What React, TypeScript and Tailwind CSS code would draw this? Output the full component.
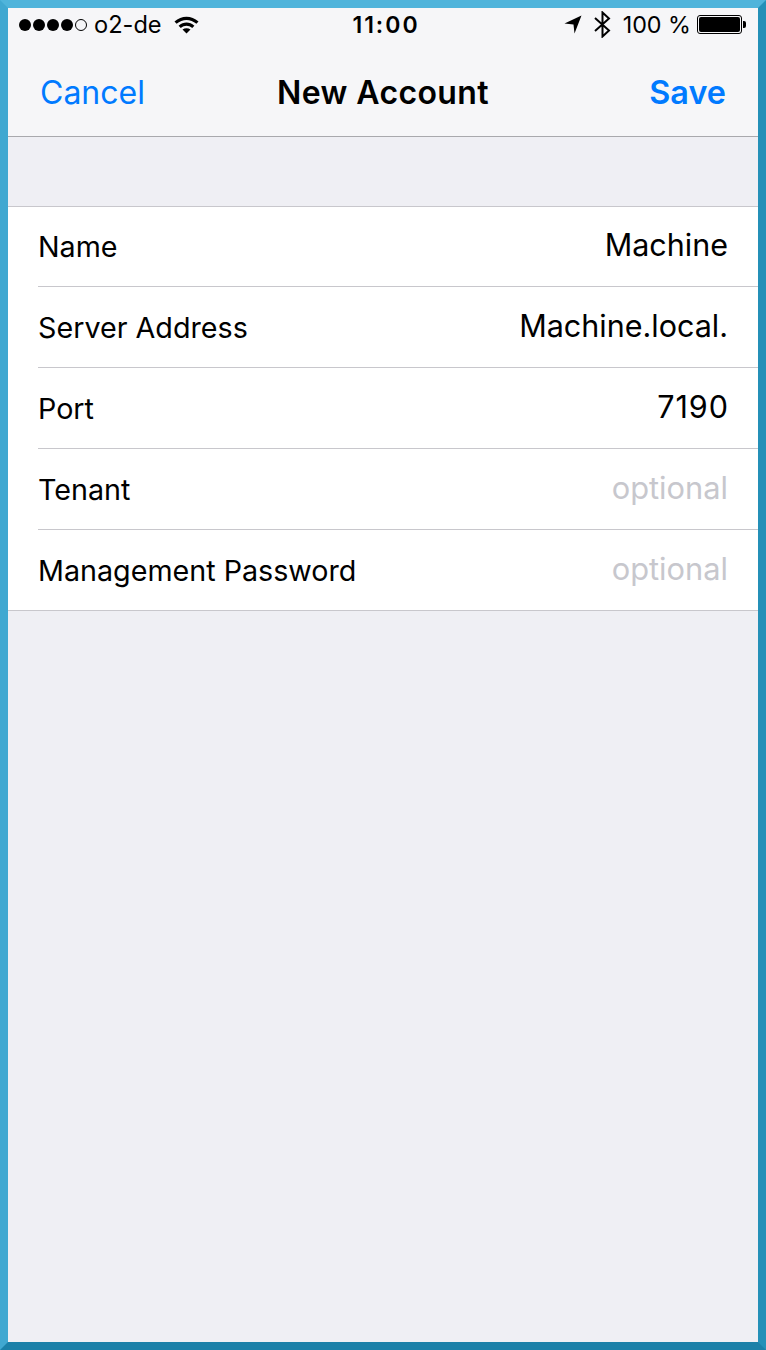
const Row = ({ label, value, placeholder, first, last, spaced }: { label: string; value: string; placeholder?: boolean; first?: boolean; last?: boolean; spaced?: boolean }) => (
  <div className={`ml-[30px] pr-[30px] flex justify-between ${first || last ? "h-[80px]" : "h-[81px]"} ${last ? "" : "border-b border-[#c8c7cc]"}`}>
    <span className={`text-[28.7px] leading-[34px] text-black ${first ? "mt-[23px]" : "mt-[24px]"}`}>{label}</span>
    <span className={`leading-[36px] ${first ? "mt-[20px]" : "mt-[21px]"} ${spaced ? "tracking-[1px] mr-[-1px]" : ""} ${placeholder ? "text-[30.8px] text-[#c7c7cd]" : "text-[30.5px] text-black"}`}>{value}</span>
  </div>
);

export default function App() {
  return (
    <div
      className="w-[766px] h-[1350px] flex flex-col border-8 border-t-[#4fb4db] border-l-[#40a8d1] border-r-[#2490b8] border-b-[#1b80a8] bg-[#efeff4] overflow-hidden"
      style={{ fontFamily: 'Inter, "Liberation Sans", sans-serif' }}
    >
      <header className="h-[129px] shrink-0 bg-[#f6f6f8] border-b border-[#a9a9ad] flex flex-col">
        <div className="h-[33px] grid grid-cols-[1fr_auto_1fr] items-center pl-[11px] pr-[12px] text-black">
          <div className="flex items-center">
            <span className="flex gap-[2px] items-center">
              <span className="w-[12px] h-[12px] rounded-full bg-black" />
              <span className="w-[12px] h-[12px] rounded-full bg-black" />
              <span className="w-[12px] h-[12px] rounded-full bg-black" />
              <span className="w-[12px] h-[12px] rounded-full bg-black" />
              <span className="w-[12px] h-[12px] rounded-full border border-black" />
            </span>
            <span className="text-[23.6px] ml-[7px] leading-[26px]">o2-de</span>
            <svg className="ml-[12px] mt-[-1px]" width="25" height="19" viewBox="0 0 25 19">
              <path d="M0.5 6.5 C7.5 0 17.5 0 24.5 6.5 L22.4 8.8 C16.5 3.6 8.5 3.6 2.6 8.8 Z" fill="#000" />
              <path d="M4.6 10.7 C9.5 6.5 15.5 6.5 20.4 10.7 L18.2 13 C14.5 10 10.5 10 6.8 13 Z" fill="#000" />
              <path d="M8.5 14.5 C11 12.8 14 12.8 16.5 14.5 L12.5 18.5 Z" fill="#000" />
            </svg>
          </div>
          <span className="ml-[7px] text-[23px] font-semibold leading-[26px] tracking-[2px]">11:00</span>
          <div className="flex items-center justify-end">
            <svg width="18" height="19" viewBox="0 0 18 19">
              <path d="M17.5 0.5 L0.5 8.5 L9.5 9.5 L10.5 18.5 Z" fill="#000" />
            </svg>
            <svg className="ml-[12px]" width="17" height="27" viewBox="0 0 17 27" fill="none" stroke="#000" strokeWidth="2">
              <path d="M1 7 L15 19.5 L8.5 25.5 V1.5 L15 7.5 L1 20" />
            </svg>
            <span className="text-[23.3px] leading-[26px] ml-[12px]">100 %</span>
            <span className="ml-[6px] flex items-center">
              <span className="w-[45px] h-[19px] rounded-[3px] border border-black p-[1px] flex">
                <span className="flex-1 bg-black rounded-[2px]" />
              </span>
              <span className="w-[3px] h-[7px] bg-black rounded-r-[2px] ml-[1px]" />
            </span>
          </div>
        </div>
        <div className="flex-1 grid grid-cols-[1fr_auto_1fr] items-center px-[32px] pt-[9px]">
          <span className="text-[32px] text-[#007aff]">Cancel</span>
          <span className="text-[32px] font-semibold tracking-[0.4px] text-black">New Account</span>
          <span className="text-[32.4px] font-semibold text-[#007aff] text-right">Save</span>
        </div>
      </header>
      <div className="h-[69px] shrink-0" />
      <section className="bg-white border-y border-[#c8c7cc]">
        <Row label="Name" value="Machine" first />
        <Row label="Server Address" value="Machine.local." />
        <Row label="Port" value="7190" spaced />
        <Row label="Tenant" value="optional" placeholder />
        <Row label="Management Password" value="optional" placeholder last />
      </section>
    </div>
  );
}
